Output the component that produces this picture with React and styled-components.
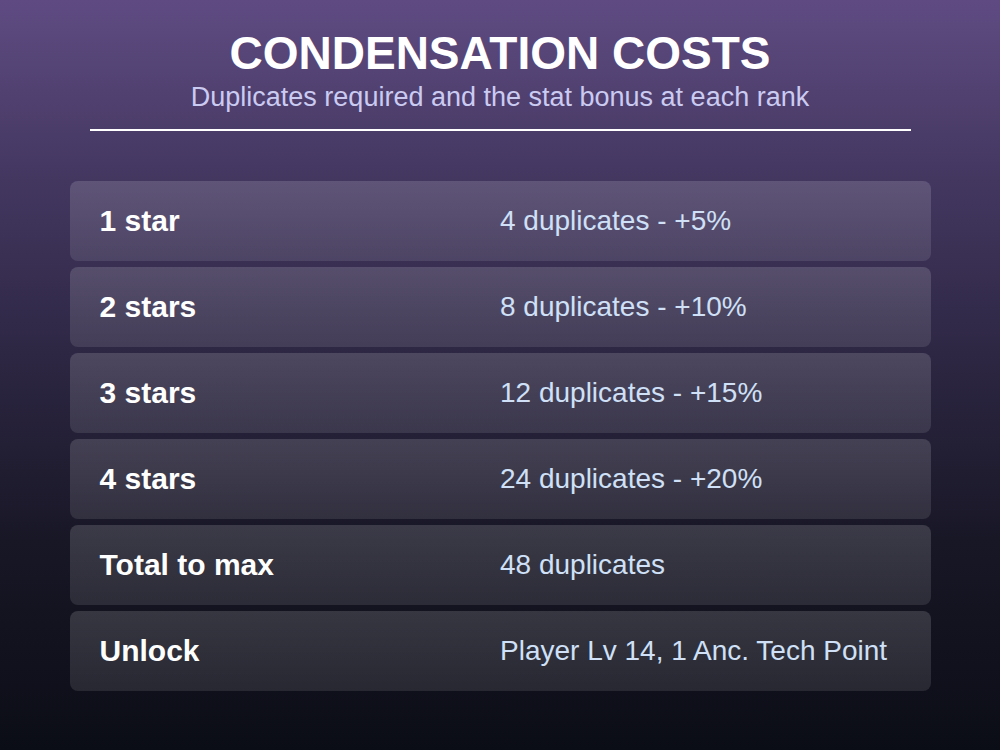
import React from 'react';
import styled, { createGlobalStyle } from 'styled-components';

const GlobalStyle = createGlobalStyle`
  html, body {
    margin: 0;
    padding: 0;
  }
  body {
    font-family: "Liberation Sans", Arial, sans-serif;
    background: #0b0d16;
  }
`;

const Page = styled.div`
  width: 1000px;
  height: 750px;
  box-sizing: border-box;
  padding-top: 27px;
  background: linear-gradient(
    180deg,
    #5f4b82 0%,
    #433760 24%,
    #2b2540 50%,
    #181726 72%,
    #0b0d16 100%
  );
  display: flex;
  flex-direction: column;
  align-items: center;
`;

const Header = styled.header`
  width: 821px;
  display: flex;
  flex-direction: column;
  align-items: center;
  padding-bottom: 16px;
  border-bottom: 2px solid #ffffff;
  margin-bottom: 50px;

  h1 {
    margin: 0;
    font-size: 46px;
    line-height: 53px;
    font-weight: 700;
    color: #ffffff;
  }

  p {
    margin: 2px 0 0;
    font-size: 27px;
    line-height: 31px;
    color: #cbcbf2;
  }
`;

const Table = styled.div`
  width: 861px;
  display: flex;
  flex-direction: column;
  gap: 6px;
`;

const Row = styled.div`
  height: 80px;
  box-sizing: border-box;
  padding: 0 30px;
  display: grid;
  grid-template-columns: 1fr 1fr;
  align-items: center;
  border-radius: 8px;
  background: linear-gradient(
    180deg,
    rgba(255, 255, 255, 0.15) 0%,
    rgba(255, 255, 255, 0.1) 100%
  );
`;

const Label = styled.span`
  font-size: 30px;
  font-weight: 700;
  color: #ffffff;
`;

const Value = styled.span`
  font-size: 28px;
  color: #cfe0f7;
`;

const rows = [
  ['1 star', '4 duplicates - +5%'],
  ['2 stars', '8 duplicates - +10%'],
  ['3 stars', '12 duplicates - +15%'],
  ['4 stars', '24 duplicates - +20%'],
  ['Total to max', '48 duplicates'],
  ['Unlock', 'Player Lv 14, 1 Anc. Tech Point'],
];

export default function App() {
  return (
    <>
      <GlobalStyle />
      <Page>
        <Header>
          <h1>CONDENSATION COSTS</h1>
          <p>Duplicates required and the stat bonus at each rank</p>
        </Header>
        <Table>
          {rows.map(([label, value]) => (
            <Row key={label}>
              <Label>{label}</Label>
              <Value>{value}</Value>
            </Row>
          ))}
        </Table>
      </Page>
    </>
  );
}
